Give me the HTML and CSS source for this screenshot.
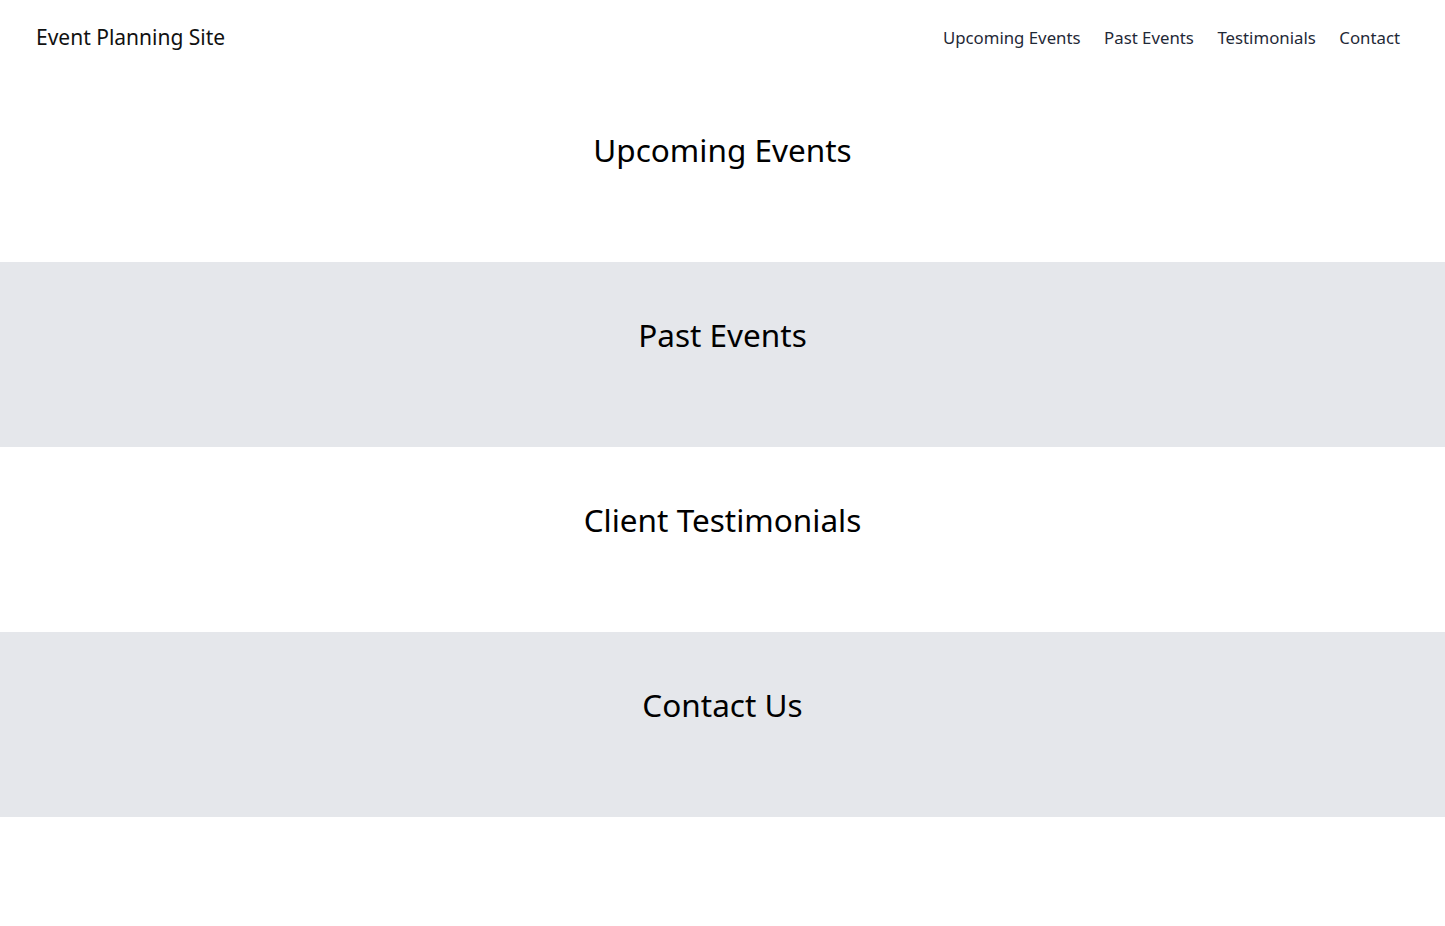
FILE: index.html
```html
<!DOCTYPE html>
<html lang="en">
<head>
<meta charset="utf-8">
<title>Event Planning Site</title>
<link rel="stylesheet" href="styles.css">
</head>
<body>
<header class="site-header">
  <div class="brand">Event Planning Site</div>
  <nav class="nav">
    <a href="#upcoming">Upcoming Events</a>
    <a href="#past">Past Events</a>
    <a href="#testimonials">Testimonials</a>
    <a href="#contact">Contact</a>
  </nav>
</header>
<main>
  <section class="section" id="upcoming"><h2>Upcoming Events</h2></section>
  <section class="section alt" id="past"><h2>Past Events</h2></section>
  <section class="section" id="testimonials"><h2>Client Testimonials</h2></section>
  <section class="section alt" id="contact"><h2>Contact Us</h2></section>
</main>
</body>
</html>
```

FILE: styles.css
```css
* { box-sizing: border-box; }
body {
  margin: 0;
  font-family: "Noto Sans", "Open Sans", sans-serif;
  color: #000;
  background: #fff;
}
.site-header {
  height: 77px;
  display: flex;
  align-items: center;
  justify-content: space-between;
  padding: 0 45px 3px 36px;
}
.brand {
  font-size: 21px;
  color: #111;
}
.nav {
  display: flex;
  gap: 23.5px;
}
.nav a {
  font-size: 16.8px;
  color: #1f2937;
  text-decoration: none;
}
.section {
  height: 185px;
  padding-top: 53px;
  text-align: center;
}
.section.alt { background: #e5e7eb; }
.section h2 {
  margin: 0;
  font-size: 31.5px;
  line-height: 40px;
  font-weight: 400;
  color: #000;
}
```
